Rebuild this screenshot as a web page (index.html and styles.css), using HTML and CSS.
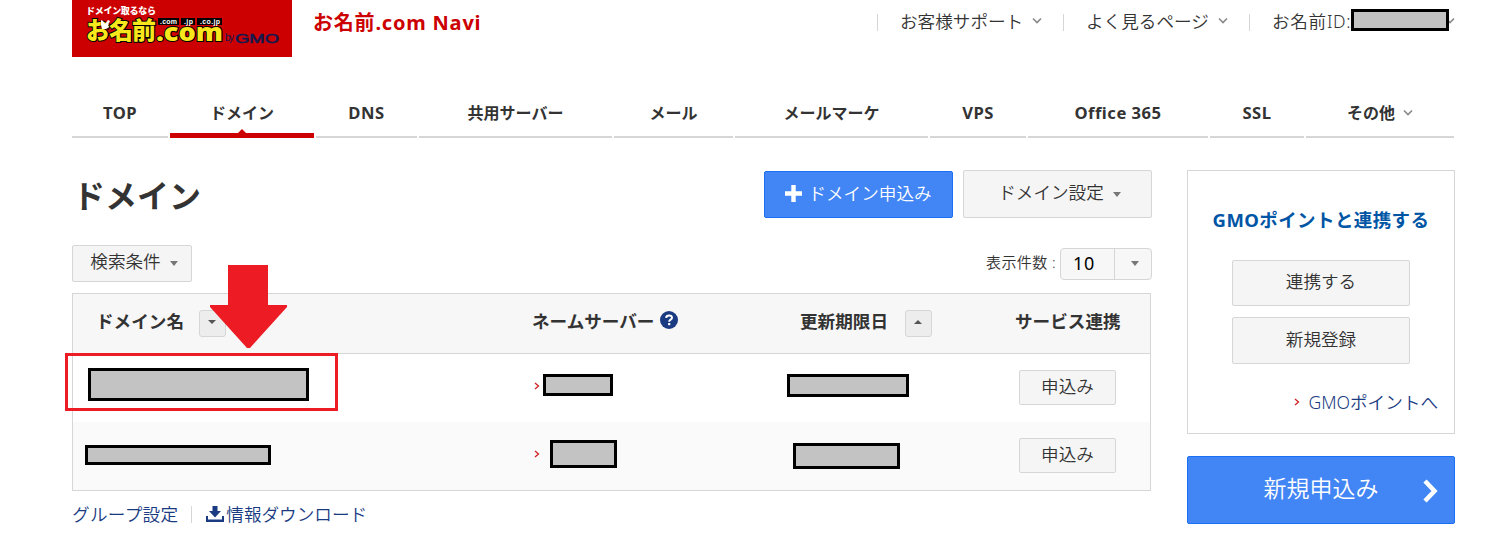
FILE: index.html
```
<!DOCTYPE html>
<html lang="ja">
<head>
<meta charset="utf-8">
<title>お名前.com Navi</title>
<link rel="stylesheet" href="styles.css">
</head>
<body>

<div class="page">

<header class="header">
  <a class="logo">
    <svg width="220" height="57" viewBox="0 0 220 57">
      <rect width="220" height="57" fill="#c00"/>
      <text class="logo-copy" x="14" y="14" textLength="70">ドメイン取るなら</text>
      <text class="logo-name" x="14" y="39" textLength="70">お名前</text>
      <text class="logo-com" x="84" y="41" textLength="67" lengthAdjust="spacingAndGlyphs">.com</text>
      <path d="M86 18h21v7h-21zM109 18h14v7h-14zM125 18h25v7h-25z" fill="#000"/>
      <text class="logo-tld" x="88" y="24" textLength="17">.com</text>
      <text class="logo-tld" x="112" y="24" textLength="9">.jp</text>
      <text class="logo-tld" x="128" y="24" textLength="20">.co.jp</text>
      <path d="M29 20l2 1 2 3 3-4 2 1-2 4 1 2-3 2h-4l-1-4z" fill="#fff"/>
      <text class="logo-by" x="153" y="41" textLength="9">by</text>
      <text class="logo-gmo" x="163" y="43" textLength="44" lengthAdjust="spacingAndGlyphs">GMO</text>
    </svg>
  </a>
  <p class="site-name">お名前.com Navi</p>
  <ul class="util">
    <li><span class="util-support">お客様サポート</span><svg class="chev" width="10" height="8" viewBox="0 0 10 8"><path d="M1 1.5l4 4 4-4"/></svg></li>
    <li><span>よく見るページ</span><svg class="chev" width="10" height="8" viewBox="0 0 10 8"><path d="M1 1.5l4 4 4-4"/></svg></li>
    <li><span class="util-id">お名前ID:</span><span class="mask mask-id"></span><svg class="chev chev-id" width="10" height="8" viewBox="0 0 10 8"><path d="M1 1.5l4 4 4-4"/></svg></li>
  </ul>
</header>

<nav class="gnav">
  <a class="latin">TOP</a>
  <a class="active">ドメイン</a>
  <a class="latin">DNS</a>
  <a>共用サーバー</a>
  <a>メール</a>
  <a>メールマーケ</a>
  <a class="latin">VPS</a>
  <a class="latin">Office 365</a>
  <a class="latin">SSL</a>
  <a>その他<svg class="chev" width="10" height="8" viewBox="0 0 10 8"><path d="M1 1.5l4 4 4-4"/></svg></a>
</nav>

<div class="columns">

<main class="main">
  <div class="title-row">
    <h1>ドメイン</h1>
    <button class="btn btn-blue btn-add"><svg width="17" height="17" viewBox="0 0 17 17"><path d="M6.3 0h4.4v6.3H17v4.4h-6.3V17H6.3v-6.3H0V6.3h6.3z" fill="#fff"/></svg>ドメイン申込み</button>
    <button class="btn btn-setting">ドメイン設定<i class="caret"></i></button>
  </div>

  <div class="filter-row">
    <button class="btn btn-search">検索条件<i class="caret"></i></button>
    <span class="count-label">表示件数 :</span>
    <div class="select"><span>10</span><b><i class="caret"></i></b></div>
  </div>

  <div class="table">
    <div class="tr thead">
      <div class="th">ドメイン名<span class="sort"><i class="caret"></i></span></div>
      <div class="th">ネームサーバー<svg class="help" width="18" height="18" viewBox="0 0 18 18"><circle cx="9" cy="9" r="9" fill="#1a3b82"/><path d="M6.1 6.9C6.3 3.6 12 3.7 12 6.8 12 8.8 9.2 8.6 9.2 10.7" fill="none" stroke="#fff" stroke-width="2"/><path d="M8.1 12h2.2v2.2H8.1z" fill="#fff"/></svg></div>
      <div class="th">更新期限日<span class="sort sort-date"><i class="caret up"></i></span></div>
      <div class="th">サービス連携</div>
    </div>
    <div class="tr">
      <div class="td"><span class="mask mask-domain1"></span></div>
      <div class="td"><svg class="arrow" width="6" height="8" viewBox="0 0 6 8"><path d="M1 1l3.5 3L1 7"/></svg><span class="mask mask-ns1"></span></div>
      <div class="td"><span class="mask mask-date1"></span></div>
      <div class="td"><button class="btn btn-apply">申込み</button></div>
    </div>
    <div class="tr even">
      <div class="td"><span class="mask mask-domain2"></span></div>
      <div class="td"><svg class="arrow" width="6" height="8" viewBox="0 0 6 8"><path d="M1 1l3.5 3L1 7"/></svg><span class="mask mask-ns2"></span></div>
      <div class="td"><span class="mask mask-date2"></span></div>
      <div class="td"><button class="btn btn-apply">申込み</button></div>
    </div>

    <!-- callout on the first domain -->
    <div class="callout"></div>
    <svg class="callout-arrow" width="78" height="84" viewBox="0 0 78 84"><path d="M18 0h40v40h19v2L40 83h-3L0 42v-2h18z" fill="#ed1c24"/></svg>
  </div>

  <div class="links">
    <a class="link-group">グループ設定</a>
    <a class="link-dl"><svg width="18" height="16" viewBox="0 0 18 16"><path d="M6.5 0h5v5H15l-6 6.5L3 5h3.500zM0 10h2v3.500h14V10h2v6H0z" fill="#1a3b82"/></svg>情報ダウンロード</a>
  </div>
</main>

<aside class="side">
  <div class="point">
    <h2>GMOポイントと連携する</h2>
    <button class="btn">連携する</button>
    <button class="btn">新規登録</button>
    <a><svg class="arrow" width="6" height="8" viewBox="0 0 6 8"><path d="M1 1l3.500 3L1 7"/></svg>GMOポイントへ</a>
  </div>
  <button class="btn btn-blue btn-new">新規申込み<svg width="16" height="24" viewBox="0 0 16 24"><path d="M2 2l9.500 10L2 22" fill="none" stroke="#fff" stroke-width="4.500"/></svg></button>
</aside>

</div>
</div>

</body>
</html>
```
FILE: styles.css
```
* {
  box-sizing: border-box;
}

body {
  margin: 0;
  background: #fff;
  color: #333;
  font-family: "Noto Sans", "Noto Sans CJK JP", sans-serif;
  font-size: 17.6px;
  font-weight: 350;
  line-height: 26px;
  white-space: nowrap;
  overflow: hidden;
}

h1, h2, p, ul {
  margin: 0;
  padding: 0;
}

.page {
  width: 1383px;
  margin-left: 72px;
}

/* Header */
.header {
  display: flex;
  height: 57px;
}

.logo {
  height: 57px;
}

.logo svg {
  display: block;
}

.logo text {
  font-family: "Noto Sans CJK JP", sans-serif;
  font-weight: 900;
}

.logo .logo-copy {
  font-size: 9px;
  fill: #fff;
}

.logo .logo-name {
  font-size: 24px;
  fill: #f8e71c;
  stroke: #000;
  stroke-width: 2px;
  paint-order: stroke;
}

.logo .logo-com {
  font-family: "Noto Sans", sans-serif;
  font-size: 25px;
  fill: #f8e71c;
  stroke: #000;
  stroke-width: 2px;
  paint-order: stroke;
}

.logo .logo-tld {
  font-family: "Liberation Sans", sans-serif;
  font-size: 7px;
  font-weight: 700;
  fill: #fff;
}

.logo .logo-by {
  font-family: "Liberation Sans", sans-serif;
  font-size: 10px;
  font-weight: 400;
  fill: #14194f;
}

.logo .logo-gmo {
  font-family: "Liberation Sans", sans-serif;
  font-size: 13px;
  font-weight: 400;
  fill: #14194f;
  stroke: #14194f;
  stroke-width: 0.6px;
}

.site-name {
  margin: 10px 0 0 21px;
  color: #c00;
  font-size: 20px;
  font-weight: 700;
  letter-spacing: 0.8px;
}

.util {
  display: flex;
  margin-left: auto;
  list-style: none;
}

.util li {
  display: flex;
  align-items: center;
  width: 186px;
  height: 17px;
  margin-top: 14px;
  padding-left: 22px;
  border-left: 1px solid #d6d6d6;
}

.util span:first-child {
  margin-top: -3px;
}

.util li:last-child {
  width: 206px;
}

.util .util-id {
  width: 79px;
  letter-spacing: 0.7px;
}

.chev {
  margin: -3px 0 0 9px;
  fill: none;
  stroke: #888;
  stroke-width: 1.6;
}

.chev-id {
  margin-left: -4px;
}

/* Grey boxes over private data */
.mask {
  position: relative;
  z-index: 1;
  flex: none;
  background: #c3c3c3;
  border: 3px solid #000;
}

.mask-id {
  width: 98px;
  height: 22px;
  margin-top: -5px;
}

/* Global nav */
.gnav {
  display: grid;
  grid-template-columns: 96px 144px 101px 193px 119px 193px 96px 180px 94px 148px;
  column-gap: 2px;
  height: 81px;
  margin-bottom: 32px;
}

.gnav a {
  padding-top: 43px;
  border-bottom: 2px solid #d6d6d6;
  font-size: 16px;
  font-weight: 700;
  text-align: center;
}

.gnav .latin {
  font-size: 16.6px;
  letter-spacing: 0.5px;
}

.gnav .chev {
  margin: 0 0 2px 8px;
}

.gnav .active {
  position: relative;
  border-bottom: 5px solid #c00;
}

.gnav .active:after {
  position: absolute;
  content: "";
  left: 68px;
  bottom: 0;
  border: 4px solid transparent;
  border-top: none;
  border-bottom-color: #c00;
}

/* Two columns */
.columns {
  display: flex;
  justify-content: space-between;
}

.main {
  width: 1080px;
}

.side {
  width: 268px;
}

/* Buttons */
.btn {
  display: flex;
  align-items: center;
  justify-content: center;
  padding: 0 0 4px;
  background: #f5f5f5;
  border: 1px solid #d6d6d6;
  border-radius: 2px;
  color: #333;
  font: inherit;
}

.btn-blue {
  background: #4285f4;
  border-color: #1a6ff5;
  color: #fff;
}

.caret {
  border: 4.5px solid transparent;
  border-top: 5px solid #777;
  border-bottom: none;
}

.caret.up {
  border-top: none;
  border-bottom: 5px solid #555;
}

.title-row {
  display: flex;
  align-items: flex-end;
  height: 48px;
}

.title-row h1 {
  margin: 0 auto -2px 0;
  padding-left: 1px;
  font-size: 32px;
  line-height: 48px;
}

.btn-add {
  width: 189px;
  height: 47px;
  margin-right: 10px;
}

.btn-add svg {
  margin: 1px 6px 0 0;
}

.btn-setting {
  width: 189px;
  height: 48px;
  padding-left: 4px;
}

.btn-setting .caret {
  margin: 4px 0 0 9px;
}

.filter-row {
  display: flex;
  align-items: flex-start;
  height: 75px;
  padding-top: 27px;
}

.btn-search {
  width: 120px;
  height: 37px;
  margin-right: auto;
  padding: 0 0 5px 4px;
}

.btn-search .caret {
  margin: 4px 0 0 9px;
}

.count-label {
  margin: 4px 4px 0 0;
  font-size: 15px;
  letter-spacing: 0.4px;
}

.select {
  display: flex;
  width: 92px;
  height: 32px;
  margin-top: 3px;
  background: #f7f7f7;
  border: 1px solid #d6d6d6;
  border-radius: 4px;
  color: #000;
  font-size: 18px;
  line-height: 29px;
}

.select span {
  width: 54px;
  padding-left: 12px;
  border-right: 1px solid #d6d6d6;
  font-weight: 400;
  letter-spacing: 0.8px;
}

.select b {
  display: flex;
  flex: 1;
  align-items: center;
  justify-content: center;
  padding: 0 0 1px 3px;
}

/* Domain list */
.table {
  position: relative;
  width: 1079px;
  height: 198px;
  border: 1px solid #d6d6d6;
}

.tr {
  display: grid;
  grid-template-columns: 459px 268px 215px 135px;
  height: 68px;
}

.tr.even {
  background: #fafafa;
}

.thead {
  height: 60px;
  background: #f7f7f7;
  border-bottom: 1px solid #d6d6d6;
}

.th {
  display: flex;
  align-items: flex-start;
  padding-top: 14px;
  font-weight: 700;
}

.th:first-child {
  padding-left: 23px;
}

.sort {
  display: flex;
  align-items: center;
  justify-content: center;
  width: 27px;
  height: 27px;
  margin: 2px 0 0 15px;
  background: #ededed;
  border: 1px solid #d6d6d6;
  border-radius: 3px;
}

.sort-date {
  margin-left: 17px;
}

.sort .caret {
  margin-bottom: 3px;
  border-width: 4px;
  border-bottom: none;
  border-top-color: #555;
}

.sort .caret.up {
  border-top: none;
  border-bottom: 4px solid #555;
}

.help {
  margin: 3px 0 0 6px;
}

.td {
  display: flex;
  align-items: flex-start;
}

.arrow {
  fill: none;
  stroke: #d02020;
  stroke-width: 1.3;
}

.td .arrow {
  margin: 28px 4px 0 2px;
}

.btn-apply {
  width: 97px;
  height: 35px;
  margin: 16px 0 0 4px;
}

.mask-domain1 { width: 221px; height: 33px; margin: 14px 0 0 15px; }
.mask-ns1 { width: 70px; height: 22px; margin: 20px 0 0 -1px; }
.mask-date1 { width: 122px; height: 23px; margin: 20px 0 0 -13px; }
.mask-domain2 { width: 186px; height: 20px; margin: 23px 0 0 12px; }
.mask-ns2 { width: 67px; height: 28px; margin: 18px 0 0 6px; }
.mask-date2 { width: 107px; height: 26px; margin: 21px 0 0 -7px; }

.callout {
  position: absolute;
  left: -8px;
  top: 59px;
  width: 273px;
  height: 58px;
  border: 3px solid #ed1c24;
}

.callout-arrow {
  position: absolute;
  left: 137px;
  top: -29px;
}

/* Links under the list */
.links {
  display: flex;
  align-items: center;
  margin-top: 10px;
  color: #1a3b82;
}

.link-group {
  padding-right: 13px;
  line-height: 17px;
  border-right: 1px solid #d6d6d6;
  letter-spacing: 0.3px;
}

.link-dl {
  display: flex;
  align-items: center;
  margin-left: 14px;
}

.link-dl svg {
  margin-right: 2px;
}

/* Side column */
.point {
  display: flex;
  flex-direction: column;
  align-items: center;
  height: 264px;
  padding-top: 36px;
  border: 1px solid #d6d6d6;
}

.point h2 {
  margin-bottom: 27px;
  color: #0055a5;
  font-size: 18.5px;
  line-height: 26px;
  letter-spacing: 0.4px;
}

.point .btn {
  width: 178px;
  height: 46px;
  margin-bottom: 11px;
}

.point .btn + .btn {
  height: 47px;
  margin-bottom: 25px;
}

.point a {
  display: flex;
  align-items: center;
  align-self: flex-end;
  margin-right: 16px;
  color: #1a3b82;
}

.point .arrow {
  margin-right: 8px;
}

.btn-new {
  position: relative;
  width: 268px;
  height: 68px;
  margin-top: 22px;
  font-size: 23px;
}

.btn-new svg {
  position: absolute;
  right: 15px;
  top: 22px;
}
```
